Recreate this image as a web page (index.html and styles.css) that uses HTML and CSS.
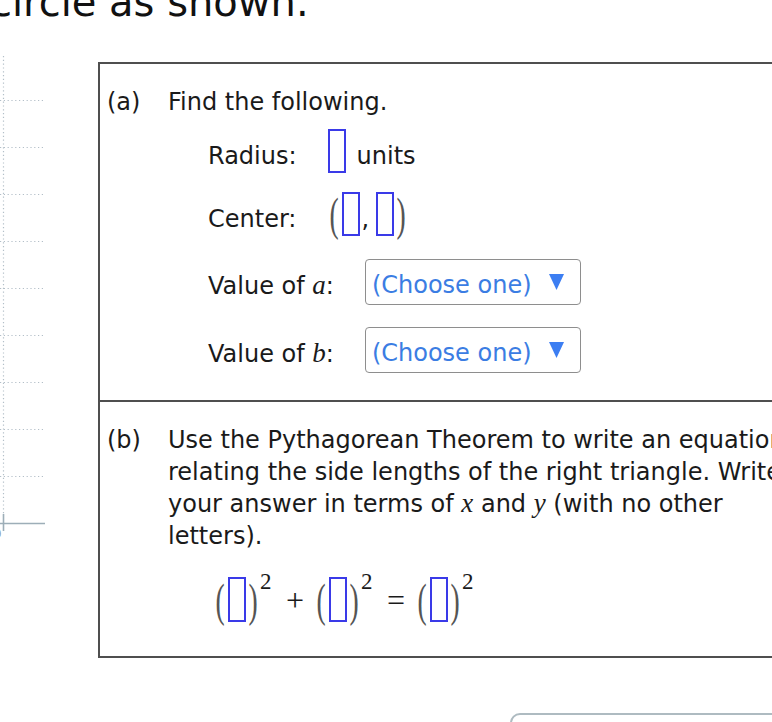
FILE: index.html
```html
<!DOCTYPE html>
<html lang="en">
<head>
<meta charset="utf-8">
<title>Circle question</title>
<link rel="stylesheet" href="styles.css">
</head>
<body>
<div class="prompt">circle as shown.</div>
<div class="main">
  <div class="graph">
    <svg width="98" height="500" viewBox="0 0 98 500" aria-hidden="true">
      <g stroke="#b3bfc8" stroke-width="1.2" stroke-dasharray="1.2 2.6" fill="none">
        <line x1="3.5" y1="2" x2="3.5" y2="462"/>
        <line x1="0" y1="46.5" x2="44" y2="46.5"/>
        <line x1="0" y1="93.5" x2="44" y2="93.5"/>
        <line x1="0" y1="140.5" x2="44" y2="140.5"/>
        <line x1="0" y1="187.5" x2="44" y2="187.5"/>
        <line x1="0" y1="234.5" x2="44" y2="234.5"/>
        <line x1="0" y1="281.5" x2="44" y2="281.5"/>
        <line x1="0" y1="328.5" x2="44" y2="328.5"/>
        <line x1="0" y1="375.5" x2="44" y2="375.5"/>
        <line x1="0" y1="422.5" x2="44" y2="422.5"/>
      </g>
      <g stroke="#9daeb8" stroke-width="1.6" fill="none">
        <line x1="0" y1="469.5" x2="45" y2="469.5"/>
        <line x1="3.5" y1="460" x2="3.5" y2="477"/>
      </g>
      <text x="-6" y="484" font-family="Liberation Sans, sans-serif" font-size="13" fill="#8d9da7">0</text>
    </svg>
  </div>
  <div class="card">
    <section class="part part-a">
      <div class="tag">(a)</div>
      <div class="body">
        <div class="lead">Find the following.</div>
        <div class="row row-radius">
          <span class="label">Radius:</span>
          <span class="mq"><span class="box"></span></span>
          <span class="unit">units</span>
        </div>
        <div class="row row-center">
          <span class="label">Center:</span>
          <span class="mq">
            <span class="paren">(</span><span class="box"></span><span class="comma">,</span><span class="box"></span><span class="paren">)</span>
          </span>
        </div>
        <div class="row row-select row-a">
          <span class="label">Value of <i class="var">a</i>:</span>
          <div class="select"><span class="select-text">(Choose one)</span><svg class="caret" width="15" height="16" viewBox="0 0 15 16"><polygon points="0,0 15,0 7.5,16" fill="#3c7ef2"/></svg></div>
        </div>
        <div class="row row-select row-b">
          <span class="label">Value of <i class="var">b</i>:</span>
          <div class="select"><span class="select-text">(Choose one)</span><svg class="caret" width="15" height="16" viewBox="0 0 15 16"><polygon points="0,0 15,0 7.5,16" fill="#3c7ef2"/></svg></div>
        </div>
      </div>
    </section>
    <section class="part part-b">
      <div class="tag">(b)</div>
      <div class="body">
        <p class="text">Use the Pythagorean Theorem to write an equation relating the side lengths of the right triangle. Write your answer in terms of <i class="var">x</i> and <i class="var">y</i> (with no other letters).</p>
        <div class="mq eq">
          <span class="paren">(</span><span class="box"></span><span class="paren">)</span><span class="sup">2</span>
          <span class="op">+</span>
          <span class="paren">(</span><span class="box"></span><span class="paren">)</span><span class="sup">2</span>
          <span class="op">=</span>
          <span class="paren">(</span><span class="box"></span><span class="paren">)</span><span class="sup">2</span>
        </div>
      </div>
    </section>
  </div>
</div>
<div class="next"></div>
</body>
</html>
```

FILE: styles.css
```css
html, body {
  margin: 0;
  padding: 0;
}
body {
  width: 772px;
  height: 722px;
  overflow: hidden;
  background: #ffffff;
  color: #1a1a1a;
  font-family: "DejaVu Sans", Verdana, sans-serif;
  font-size: 24px;
}

.prompt {
  font-size: 40px;
  line-height: 40px;
  margin: -18px 0 0 -10px;
  white-space: nowrap;
  color: #111;
}

.main {
  display: flex;
  margin-top: 32px;
}
.graph {
  flex: none;
  width: 98px;
}
.graph svg {
  display: block;
  overflow: visible;
}

.card {
  flex: none;
  width: 730px;
  margin-top: 8px;
  border: 2px solid #4f4f4f;
}

.part {
  display: grid;
  grid-template-columns: 61px 1fr;
  padding-left: 7px;
  padding-right: 18px;
}
.part-a {
  padding-top: 23px;
  padding-bottom: 21px;
  border-bottom: 2px solid #4f4f4f;
}
.part-b {
  padding-top: 23px;
  padding-bottom: 34px;
}
.tag {
  line-height: 31px;
}
.lead {
  line-height: 31px;
}

.row {
  display: flex;
  align-items: center;
  padding-left: 40px;
}
.row .label {
  line-height: 28px;
  margin-right: 31px;
}
.row-radius { margin-top: 11px; }
.row-center { margin-top: 10px; }
.row-a { margin-top: 14px; }
.row-b { margin-top: 16px; }
.row-radius .mq,
.row-center .mq {
  margin-bottom: 9px;
}
.unit {
  line-height: 28px;
  margin-left: 11px;
}

.var {
  font-family: "Liberation Serif", "Times New Roman", serif;
  font-style: italic;
  font-size: 27px;
}

.mq {
  display: inline-flex;
  align-items: center;
}
.box {
  box-sizing: border-box;
  width: 18px;
  height: 44px;
  border: 2px solid #3a3ae8;
}
.paren {
  font-family: "Liberation Serif", "Times New Roman", serif;
  font-size: 24px;
  line-height: 24px;
  width: 14px;
  text-align: center;
  color: #555;
  transform: scale(1.15, 1.95);
}
.paren + .box {
  margin-left: 1px;
}
.comma {
  width: 16px;
  line-height: 24px;
  padding-left: 1px;
  box-sizing: border-box;
  margin-top: 10px;
}

.select {
  box-sizing: border-box;
  width: 216px;
  height: 46px;
  display: flex;
  align-items: center;
  justify-content: space-between;
  padding: 0 16px 0 6px;
  border: 1px solid #8e8e8e;
  border-radius: 4px;
  margin-bottom: 6px;
}
.select-text {
  font-size: 24px;
  line-height: 28px;
  padding-top: 5px;
  color: #3b7de3;
}
.caret {
  display: block;
  flex: none;
}

.text {
  margin: 0;
  line-height: 31.5px;
}

.eq {
  display: flex;
  margin-top: 25px;
  padding-left: 45px;
}
.eq .box {
  height: 45px;
}
.sup {
  align-self: flex-start;
  width: 11px;
  font-family: "Liberation Serif", "Times New Roman", serif;
  font-size: 23px;
  line-height: 23px;
  margin-top: -7px;
}
.op {
  font-family: "Liberation Serif", "Times New Roman", serif;
  font-size: 32px;
  line-height: 32px;
  margin: 0 10px 0 15px;
}

.next {
  box-sizing: border-box;
  margin: 55px 0 0 510px;
  width: 300px;
  height: 60px;
  border: 2px solid #aebbc1;
  border-radius: 10px;
}
```
